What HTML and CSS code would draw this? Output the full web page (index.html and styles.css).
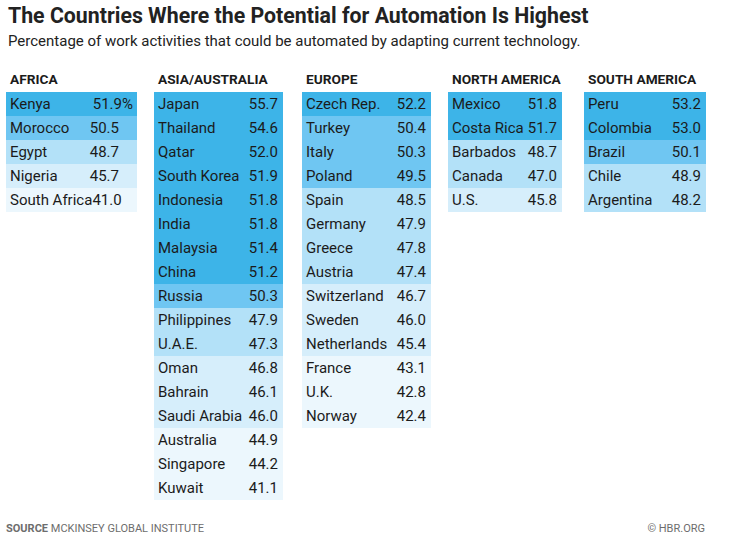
FILE: index.html
```html
<!DOCTYPE html>
<html>
<head>
<meta charset="utf-8">
<link rel="stylesheet" href="styles.css">
</head>
<body>
<div class="page">
  <h1 class="title">The Countries Where the Potential for Automation Is Highest</h1>
  <p class="subtitle">Percentage of work activities that could be automated by adapting current technology.</p>

  <div class="regions">
    <section class="region r-africa">
      <h2 class="region-name">AFRICA</h2>
      <div class="table">
        <div class="row c5"><span>Kenya</span><span class="val">51.9<span class="pct">%</span></span></div>
        <div class="row c4"><span>Morocco</span><span class="val">50.5</span></div>
        <div class="row c3"><span>Egypt</span><span class="val">48.7</span></div>
        <div class="row c2"><span>Nigeria</span><span class="val">45.7</span></div>
        <div class="row c1"><span>South Africa</span><span class="val">41.0</span></div>
      </div>
    </section>

    <section class="region r-asia">
      <h2 class="region-name">ASIA/AUSTRALIA</h2>
      <div class="table">
        <div class="row c5"><span>Japan</span><span class="val">55.7</span></div>
        <div class="row c5"><span>Thailand</span><span class="val">54.6</span></div>
        <div class="row c5"><span>Qatar</span><span class="val">52.0</span></div>
        <div class="row c5"><span>South Korea</span><span class="val">51.9</span></div>
        <div class="row c5"><span>Indonesia</span><span class="val">51.8</span></div>
        <div class="row c5"><span>India</span><span class="val">51.8</span></div>
        <div class="row c5"><span>Malaysia</span><span class="val">51.4</span></div>
        <div class="row c5"><span>China</span><span class="val">51.2</span></div>
        <div class="row c4"><span>Russia</span><span class="val">50.3</span></div>
        <div class="row c3"><span>Philippines</span><span class="val">47.9</span></div>
        <div class="row c3"><span>U.A.E.</span><span class="val">47.3</span></div>
        <div class="row c2"><span>Oman</span><span class="val">46.8</span></div>
        <div class="row c2"><span>Bahrain</span><span class="val">46.1</span></div>
        <div class="row c2"><span>Saudi Arabia</span><span class="val">46.0</span></div>
        <div class="row c1"><span>Australia</span><span class="val">44.9</span></div>
        <div class="row c1"><span>Singapore</span><span class="val">44.2</span></div>
        <div class="row c1"><span>Kuwait</span><span class="val">41.1</span></div>
      </div>
    </section>

    <section class="region r-europe">
      <h2 class="region-name">EUROPE</h2>
      <div class="table">
        <div class="row c5"><span>Czech Rep.</span><span class="val">52.2</span></div>
        <div class="row c4"><span>Turkey</span><span class="val">50.4</span></div>
        <div class="row c4"><span>Italy</span><span class="val">50.3</span></div>
        <div class="row c4"><span>Poland</span><span class="val">49.5</span></div>
        <div class="row c3"><span>Spain</span><span class="val">48.5</span></div>
        <div class="row c3"><span>Germany</span><span class="val">47.9</span></div>
        <div class="row c3"><span>Greece</span><span class="val">47.8</span></div>
        <div class="row c3"><span>Austria</span><span class="val">47.4</span></div>
        <div class="row c2"><span>Switzerland</span><span class="val">46.7</span></div>
        <div class="row c2"><span>Sweden</span><span class="val">46.0</span></div>
        <div class="row c2"><span>Netherlands</span><span class="val">45.4</span></div>
        <div class="row c1"><span>France</span><span class="val">43.1</span></div>
        <div class="row c1"><span>U.K.</span><span class="val">42.8</span></div>
        <div class="row c1"><span>Norway</span><span class="val">42.4</span></div>
      </div>
    </section>

    <section class="region r-north">
      <h2 class="region-name">NORTH AMERICA</h2>
      <div class="table">
        <div class="row c5"><span>Mexico</span><span class="val">51.8</span></div>
        <div class="row c5"><span>Costa Rica</span><span class="val">51.7</span></div>
        <div class="row c3"><span>Barbados</span><span class="val">48.7</span></div>
        <div class="row c3"><span>Canada</span><span class="val">47.0</span></div>
        <div class="row c2"><span>U.S.</span><span class="val">45.8</span></div>
      </div>
    </section>

    <section class="region r-south">
      <h2 class="region-name">SOUTH AMERICA</h2>
      <div class="table">
        <div class="row c5"><span>Peru</span><span class="val">53.2</span></div>
        <div class="row c5"><span>Colombia</span><span class="val">53.0</span></div>
        <div class="row c4"><span>Brazil</span><span class="val">50.1</span></div>
        <div class="row c3"><span>Chile</span><span class="val">48.9</span></div>
        <div class="row c3"><span>Argentina</span><span class="val">48.2</span></div>
      </div>
    </section>
  </div>

  <footer class="footer">
    <div class="source"><b>SOURCE</b> MCKINSEY GLOBAL INSTITUTE</div>
    <div class="credit">© HBR.ORG</div>
  </footer>
</div>
</body>
</html>
```

FILE: styles.css
```css
html, body {
  margin: 0;
  padding: 0;
  background: #ffffff;
}

.page {
  width: 729px;
  height: 538px;
  box-sizing: border-box;
  padding: 3px 0 0 0;
  font-family: Roboto, "Liberation Sans", sans-serif;
  color: #1b1b1b;
  display: flex;
  flex-direction: column;
}

.title {
  margin: 0 0 0 8px;
  font-size: 21.3px;
  line-height: 25px;
  font-weight: 700;
  color: #222222;
}

.subtitle {
  margin: 4px 0 0 8px;
  font-size: 15px;
  line-height: 18px;
  color: #222222;
}

.regions {
  display: flex;
  margin-top: 21px;
  padding-left: 6px;
}

.region-name {
  margin: 0 0 5px 4px;
  font-size: 13.7px;
  line-height: 16px;
  font-weight: 700;
  color: #1b1b1b;
}

.r-africa { width: 131px; margin-right: 17px; }
.r-asia { width: 129px; margin-right: 19px; }
.r-europe { width: 129px; margin-right: 17px; }
.r-north { width: 114px; margin-right: 22px; }
.r-south { width: 122px; }

.table {
  display: flex;
  flex-direction: column;
}

.row {
  display: flex;
  justify-content: space-between;
  align-items: center;
  height: 24px;
  padding: 0 5px 0 4px;
  font-size: 15px;
  white-space: nowrap;
}

.r-africa .row { padding-right: 18px; }
.pct { margin-right: -14px; }

.c5 { background: #3db4e8; }
.c4 { background: #6fc6f2; }
.c3 { background: #b3e1f8; }
.c2 { background: #d6eefb; }
.c1 { background: #ecf7fd; }

.footer {
  margin-top: auto;
  display: flex;
  justify-content: space-between;
  padding: 0 24px 2px 6px;
  font-size: 11px;
  line-height: 14px;
  color: #6d6d6d;
}

.source b {
  font-weight: 700;
}
```
